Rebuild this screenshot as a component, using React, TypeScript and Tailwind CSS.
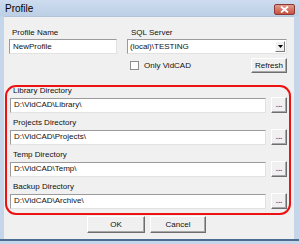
const FIELDS = [
  { label: 'Library Directory', value: 'D:\\VidCAD\\Library\\' },
  { label: 'Projects Directory', value: 'D:\\VidCAD\\Projects\\' },
  { label: 'Temp Directory', value: 'D:\\VidCAD\\Temp\\' },
  { label: 'Backup Directory', value: 'D:\\VidCAD\\Archive\\' },
]

function TextBox({ value, className = '' }: { value: string; className?: string }) {
  return (
    <div
      className={`h-[15px] bg-white border border-t-[#9b9b9b] border-l-[#9b9b9b] border-r-[#e2e2e2] border-b-[#e2e2e2] flex items-center pl-[3px] text-[8px] text-[#111] leading-none ${className}`}
    >
      {value}
    </div>
  )
}

function Btn({ label, className = '' }: { label: string; className?: string }) {
  return (
    <div
      className={`flex items-center justify-center bg-[#f0f0f0] border border-t-white border-l-white border-r-[#6e6e6e] border-b-[#6e6e6e] shadow-[inset_-1px_-1px_0_#a8a8a8] text-[8px] text-[#111] leading-none ${className}`}
    >
      {label}
    </div>
  )
}

export default function App() {
  return (
    <div className="w-[299px] h-[244px] bg-[#c5d6ea] flex flex-col font-['Liberation_Sans',Arial,sans-serif] overflow-hidden">
      {/* title bar */}
      <div className="h-[16px] flex items-center pl-[5px] pr-[4px] bg-gradient-to-b from-[#cddcee] to-[#bccfe6]">
        <span className="text-[10px] text-black leading-none mt-[1px]">Profile</span>
        <div className="ml-auto mt-[2px] w-[21px] h-[11px] rounded-[2px] border border-[#8a3a32] bg-gradient-to-b from-[#e29a8e] to-[#c7503f] flex items-center justify-center">
          <svg width="9" height="7" viewBox="0 0 9 7">
            <path d="M1 0.5 L8 6.5 M8 0.5 L1 6.5" stroke="#ffffff" strokeWidth="1.8" />
          </svg>
        </div>
      </div>

      {/* client */}
      <div className="relative ml-[4px] mr-[5px] h-[223px] bg-[#f0f0f0] border-t border-[#b4c5da]">
        {/* top row */}
        <div className="flex pt-[10px]">
          <div className="ml-[5px] w-[108px]">
            <div className="pl-[3px] text-[8px] leading-[11px] text-[#111]">Profile Name</div>
            <TextBox value="NewProfile" className="mt-[1px]" />
          </div>
          <div className="ml-[10px] w-[160px]">
            <div className="pl-[4px] text-[8px] leading-[11px] text-[#111]">SQL Server</div>
            <div className="mt-[1px] h-[15px] bg-white border border-t-[#9b9b9b] border-l-[#9b9b9b] border-r-[#e2e2e2] border-b-[#e2e2e2] flex items-center pl-[2px] text-[8px] leading-none text-[#111]">
              (local)\TESTING
              <div className="ml-auto mr-[1px] w-[10px] h-[11px] bg-[#f0f0f0] border border-t-white border-l-white border-r-[#7a7a7a] border-b-[#7a7a7a] flex items-center justify-center">
                <svg width="5" height="3" viewBox="0 0 5 3">
                  <path d="M0 0 H5 L2.5 3 Z" fill="#000" />
                </svg>
              </div>
            </div>
            <div className="flex items-center mt-[4px]">
              <div className="ml-[3px] w-[9px] h-[9px] bg-white border border-[#8f8f8f]" />
              <span className="ml-[5px] text-[8px] leading-none text-[#111]">Only VidCAD</span>
              <Btn label="Refresh" className="ml-auto w-[36px] h-[15px]" />
            </div>
          </div>
        </div>

        {/* directories */}
        <div className="mt-[12px] ml-[6px] flex flex-col gap-[4px]">
          {FIELDS.map((f) => (
            <div key={f.label}>
              <div className="pl-[3px] text-[8px] leading-[11px] text-[#111]">{f.label}</div>
              <div className="flex items-center mt-[1px]">
                <TextBox value={f.value} className="w-[256px]" />
                <Btn label="..." className="ml-[5px] w-[16px] h-[16px] text-[#3552a8] font-bold" />
              </div>
            </div>
          ))}
        </div>

        {/* buttons */}
        <div className="flex justify-center gap-[5px] mt-[7px] pr-[5px]">
          <Btn label="OK" className="w-[58px] h-[17px]" />
          <Btn label="Cancel" className="w-[56px] h-[17px]" />
        </div>

        {/* red annotation */}
        <div className="absolute left-[1px] top-[68px] w-[286px] h-[130px] border-2 border-[#ee1111] rounded-[11px] pointer-events-none" />
      </div>
      <div className="h-[2px] bg-[#4c6d92] ml-0" />
    </div>
  )
}
